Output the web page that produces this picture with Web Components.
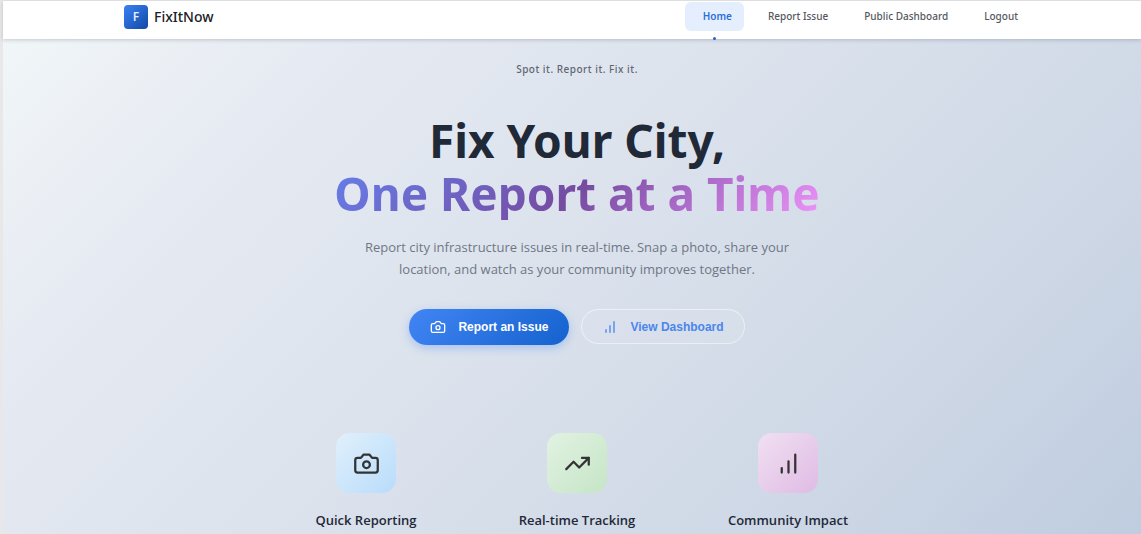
<!DOCTYPE html>
<html lang="en">
<head>
<meta charset="utf-8">
<meta name="viewport" content="width=device-width, initial-scale=1">
<title>FixItNow</title>
<style>
  html { height: 100%; }
  body {
    margin: 0;
    min-height: 100%;
    box-sizing: border-box;
    padding: 1px 0 0 3px;
    background: #e8e8e8;
    display: flex;
    overflow: hidden;
    font-family: "Noto Sans", "Open Sans", sans-serif;
    color: #1e293b;
  }
</style>
</head>
<body>
<fix-app></fix-app>

<script>
const define = (name, html) => {
  const template = document.createElement('template');
  template.innerHTML = html;
  customElements.define(name, class extends HTMLElement {
    constructor() {
      super();
      this.attachShadow({ mode: 'open' }).append(template.content.cloneNode(true));
    }
  });
};

const ICONS = {
  camera: '<path d="M14.500 4h-5L7 7H4a2 2 0 0 0-2 2v9a2 2 0 0 0 2 2h16a2 2 0 0 0 2-2V9a2 2 0 0 0-2-2h-3z"/><circle cx="12" cy="13" r="3"/>',
  bars: '<path d="M18 20V4M12 20V10M6 20v-4"/>',
  trend: '<path d="M22 7l-8.500 8.500-5-5L2 17"/><path d="M16 7h6v6"/>'
};

customElements.define('fix-icon', class extends HTMLElement {
  connectedCallback() {
    const root = this.shadowRoot || this.attachShadow({ mode: 'open' });
    root.innerHTML = `<style>
      :host { display: inline-flex; width: var(--icon-size, 16px); height: var(--icon-size, 16px); flex: none; }
      svg { width: 100%; height: 100%; fill: none; stroke: currentColor; stroke-width: 2; stroke-linecap: round; stroke-linejoin: round; }
      </style><svg viewBox="0 0 24 24" aria-hidden="true">${ICONS[this.getAttribute('name')]}</svg>`;
  }
});

define('fix-brand', `<style>
  :host { display: block; }
  a { display: flex; align-items: center; gap: 6px; color: #202124; text-decoration: none; font-size: 14px; line-height: 24px; font-weight: 500; }
  .mark { display: grid; place-items: center; width: 24px; height: 24px; border-radius: 4px;
    background: linear-gradient(135deg, #3b82f6, #1048a4); color: #e6effc; font-size: 12px; font-weight: 600; }
  </style><a href="#"><span class="mark">F</span><span>FixItNow</span></a>`);

customElements.define('fix-nav-link', class extends HTMLElement {
  constructor() {
    super();
    this.attachShadow({ mode: 'open' }).innerHTML = `<style>
      :host { display: block; position: relative; }
      a { display: block; padding: 0 12px 0 18px; border-radius: 6px; font-size: 10px; line-height: 29px; font-weight: 500; color: #55595f; text-decoration: none; white-space: nowrap; }
      :host([active]) a { background: #e5eefc; color: #2a6fdb; font-weight: 600; }
      :host([active])::after { content: ""; position: absolute; left: 50%; top: 100%; margin: 6px 0 0 -1px; width: 3px; height: 3px; border-radius: 50%; background: #1f63c9; }
      </style><a href="#"><slot></slot></a>`;
  }
  connectedCallback() {
    if (this.hasAttribute('active')) this.shadowRoot.querySelector('a').setAttribute('aria-current', 'page');
  }
});

define('fix-header', `<style>
  :host { display: block; position: relative; background: #fff; padding: 1px 0 8px 10px; box-shadow: 0 1px 4px rgba(30, 41, 59, .22); }
  .bar { max-width: 906px; margin: 0 auto; display: flex; align-items: center; justify-content: space-between; }
  fix-brand { align-self: flex-start; padding-top: 3px; }
  nav { display: flex; gap: 6px; }
  </style>
  <div class="bar">
    <fix-brand></fix-brand>
    <nav aria-label="Main">
      <fix-nav-link active>Home</fix-nav-link>
      <fix-nav-link>Report Issue</fix-nav-link>
      <fix-nav-link>Public Dashboard</fix-nav-link>
      <fix-nav-link>Logout</fix-nav-link>
    </nav>
  </div>`);

define('fix-button', `<style>
  :host { display: block; }
  button { display: flex; align-items: center; gap: 12px; height: 36px; margin: 0; padding: 0 21px; border: 0; border-radius: 18px;
    font: 700 12px/16px "Liberation Sans", Arial, sans-serif; color: #fff; white-space: nowrap; cursor: pointer;
    background: linear-gradient(135deg, #4285f4, #1462cf); box-shadow: 0 3px 10px rgba(66, 133, 244, .35); }
  :host([variant="outline"]) button { height: 35px; padding: 0 20px; border: 1px solid rgba(255, 255, 255, .5); background: rgba(255, 255, 255, .06); color: #4a86ec; box-shadow: none; }
  </style><button type="button"><slot name="icon"></slot><slot></slot></button>`);

define('fix-feature', `<style>
  :host { display: flex; flex-direction: column; align-items: center; }
  .tile { display: grid; place-items: center; width: 60px; height: 60px; border-radius: 14px; color: #333; background: var(--tile); --icon-size: 27px; }
  h3 { margin: 16px 0 0; font-family: "Open Sans", sans-serif; font-size: 13px; line-height: 22px; font-weight: 600; white-space: nowrap; color: #1f2937; }
  </style><div class="tile"><slot name="icon"></slot></div><h3><slot></slot></h3>`);

define('fix-hero', `<style>
  :host { display: block; padding: 20px 0 0 10px; text-align: center; }
  .tagline { margin: 0; font-size: 10px; line-height: 20px; font-weight: 500; letter-spacing: 0.5px; color: #5f6673; }
  h1 { margin: 35px 0 0; font-size: 46px; line-height: 53px; font-weight: 700; color: #1f2937; }
  h1 span { display: block; width: fit-content; margin: 0 auto; color: transparent;
    background: linear-gradient(135deg, #667eea 0%, #764ba2 50%, #f093fb 100%); background-clip: text; -webkit-background-clip: text; }
  .lead { max-width: 450px; margin: 16px auto 0; font-family: "Open Sans", sans-serif; font-size: 13px; line-height: 22px; color: #6f7785; }
  .actions { display: flex; justify-content: center; align-items: flex-start; gap: 12px; margin-top: 29px; }
  .features { display: grid; grid-template-columns: repeat(3, 1fr); max-width: 633px; margin: 88px auto 0; }
  </style>
  <p class="tagline">Spot it. Report it. Fix it.</p>
  <h1>Fix Your City,<span>One Report at a Time</span></h1>
  <p class="lead">Report city infrastructure issues in real-time. Snap a photo, share your location, and watch as your community improves together.</p>
  <div class="actions">
    <fix-button><fix-icon slot="icon" name="camera"></fix-icon>Report an Issue</fix-button>
    <fix-button variant="outline"><fix-icon slot="icon" name="bars"></fix-icon>View Dashboard</fix-button>
  </div>
  <div class="features">
    <fix-feature style="--tile: linear-gradient(135deg, #e0f0fc, #b9dcfa)"><fix-icon slot="icon" name="camera"></fix-icon>Quick Reporting</fix-feature>
    <fix-feature style="--tile: linear-gradient(135deg, #e2f2e2, #c5e5c6)"><fix-icon slot="icon" name="trend"></fix-icon>Real-time Tracking</fix-feature>
    <fix-feature style="--tile: linear-gradient(135deg, #f1e0f2, #dfbbe4)"><fix-icon slot="icon" name="bars"></fix-icon>Community Impact</fix-feature>
  </div>`);

define('fix-app', `<style>
  :host { display: flex; flex-direction: column; flex: 1; min-width: 0; }
  fix-hero { flex: 1; background: linear-gradient(135deg, #f1f6f8 0%, #e6eaf2 20%, #dce3ed 45%, #cfd8e6 75%, #bfcde0 100%); }
  </style><fix-header></fix-header><fix-hero></fix-hero>`);
</script>
</body>
</html>
